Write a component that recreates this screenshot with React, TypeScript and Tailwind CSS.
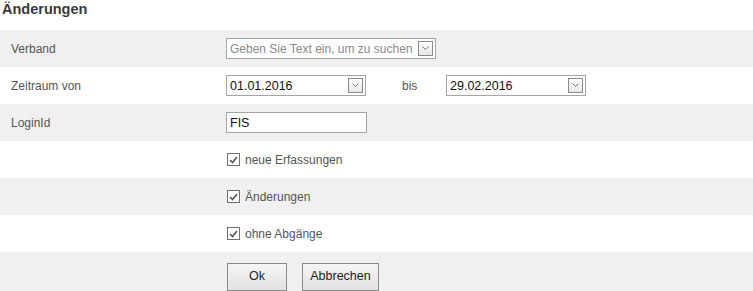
import React from "react";

const font = { fontFamily: "'Liberation Sans', Arial, sans-serif" };

function Chevron() {
	return (
		<svg width="7" height="5" viewBox="0 0 7 5" className="block">
			<path d="M0.5 0.5 L3.5 3.5 L6.5 0.5" fill="none" stroke="#7a7a7a" strokeWidth="1" />
		</svg>
	);
}

function DropButton() {
	return (
		<span className="absolute right-[2px] top-[2px] flex h-[15px] w-[15px] items-center justify-center border border-[#8a8a8a] bg-gradient-to-b from-white to-[#e6e6e6]">
			<Chevron />
		</span>
	);
}

function Select({ value, width, placeholder }: { value: string; width: string; placeholder?: boolean }) {
	return (
		<div className={`relative h-[21px] overflow-hidden border border-[#a5a5a5] bg-white ${width}`}>
			<span className={`block whitespace-nowrap pl-[3px] pt-[1px] leading-[18px] ${placeholder ? "text-[12px] text-[#8a8a8a]" : "text-[12.5px] text-[#111]"}`}>{value}</span>
			<DropButton />
		</div>
	);
}

function CheckRow({ label, gray }: { label: string; gray?: boolean }) {
	return (
		<div className={`flex h-[37px] items-center ${gray ? "bg-[#f0f0f0]" : "bg-white"}`}>
			<div className="w-[227px]" />
			<span className="flex h-[13px] w-[13px] items-center justify-center border border-[#707070] bg-white">
				<svg width="9" height="8" viewBox="0 0 9 8">
					<path d="M1 4 L3.5 6.5 L8 1" fill="none" stroke="#555" strokeWidth="1.6" />
				</svg>
			</span>
			<span className="ml-[5px] text-[12px] text-[#555]">{label}</span>
		</div>
	);
}

export default function App() {
	return (
		<div className="h-[291px] w-[753px] overflow-hidden bg-white" style={font}>
			<h1 className="h-[30px] pl-[2px] pt-[1px] text-[14.5px] font-bold leading-[17px] text-[#3a3a3a]">Änderungen</h1>

			<div className="flex h-[37px] items-center bg-[#f0f0f0]">
				<div className="w-[226px] pl-[11px] text-[12px] text-[#555]">Verband</div>
				<Select value="Geben Sie Text ein, um zu suchen" width="w-[210px]" placeholder />
			</div>

			<div className="flex h-[37px] items-center bg-white">
				<div className="w-[226px] pl-[11px] text-[12px] text-[#555]">Zeitraum von</div>
				<Select value="01.01.2016" width="w-[140px]" />
				<div className="w-[80px] pl-[36px] text-[12px] text-[#555]">bis</div>
				<Select value="29.02.2016" width="w-[140px]" />
			</div>

			<div className="flex h-[37px] items-center bg-[#f0f0f0]">
				<div className="w-[226px] pl-[11px] text-[12px] text-[#555]">LoginId</div>
				<div className="h-[21px] w-[141px] border border-[#a5a5a5] bg-white pl-[3px] pt-[1px] text-[12.5px] leading-[18px] text-[#111]">FIS</div>
			</div>

			<CheckRow label="neue Erfassungen" />
			<CheckRow label="Änderungen" gray />
			<CheckRow label="ohne Abgänge" />

			<div className="flex h-[39px] items-end gap-[15px] bg-[#f0f0f0] pl-[227px]">
				<button className="h-[28px] w-[60px] border border-[#8a8a8a] bg-gradient-to-b from-[#f6f6f6] to-[#e2e2e2] pb-[2px] text-[12.5px] text-[#222]">Ok</button>
				<button className="h-[28px] w-[77px] border border-[#8a8a8a] bg-gradient-to-b from-[#f6f6f6] to-[#e2e2e2] pb-[2px] text-[12.5px] text-[#222]">Abbrechen</button>
			</div>
		</div>
	);
}
